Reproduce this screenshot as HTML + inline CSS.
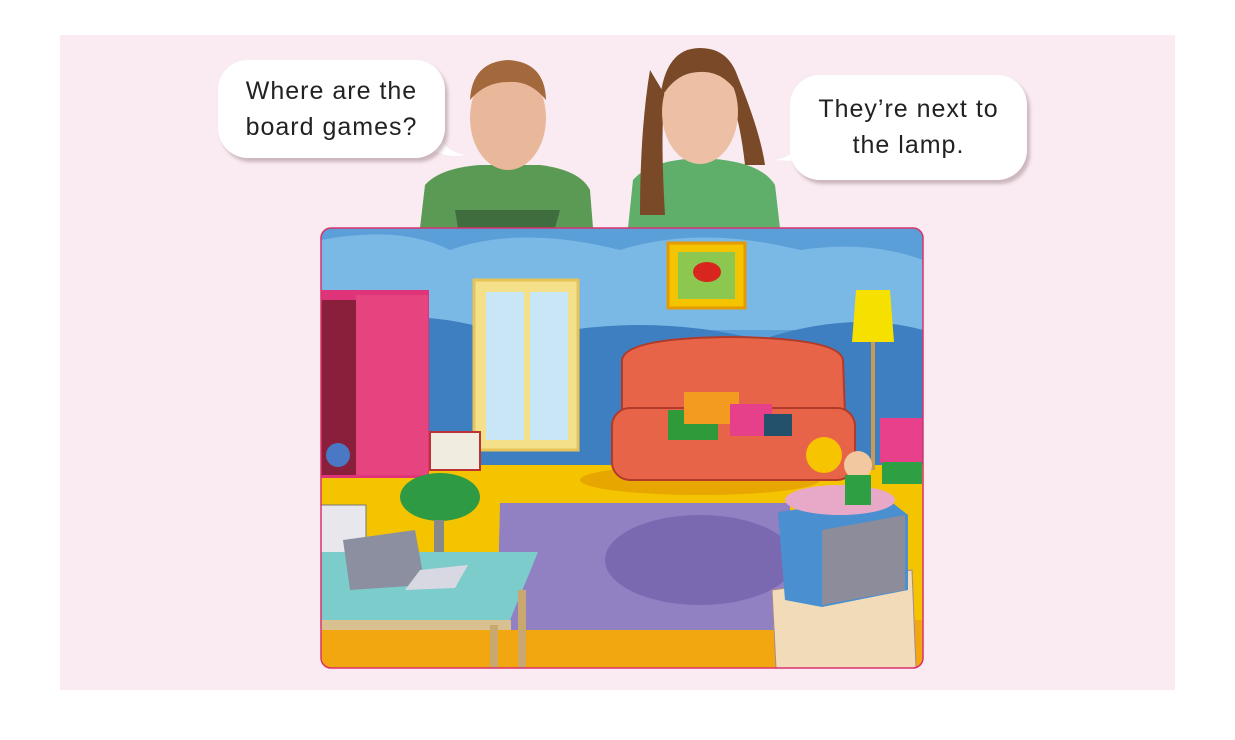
<!DOCTYPE html>
<html><head><meta charset="utf-8"><style>
html,body{margin:0;padding:0;background:#fff;width:1235px;height:740px;overflow:hidden}
.panel{position:absolute;left:60px;top:35px;width:1115px;height:655px;background:#f9ebf1}
.bub{position:absolute;background:#fff;border-radius:30px;box-shadow:3px 4px 3px rgba(150,120,130,.45);font-family:"Liberation Sans",sans-serif;font-size:25px;color:#222;text-align:center;line-height:36px;letter-spacing:1px}
svg{position:absolute;left:0;top:0}
</style></head><body>
<div class="panel"></div>
<svg width="1235" height="740">
<!-- boy -->
<path d="M420 228 L425 185 Q440 168 480 165 L540 165 Q580 170 590 190 L593 228 Z" fill="#5a9a55"/>
<ellipse cx="508" cy="118" rx="38" ry="52" fill="#e9b79a"/>
<path d="M470 100 Q472 62 508 60 Q545 62 546 100 Q530 80 508 82 Q485 82 470 100Z" fill="#a3683c"/>
<path d="M455 210 L560 210 L555 228 L458 228Z" fill="#3f6d3d"/>
<!-- girl -->
<path d="M628 228 L633 180 Q650 160 700 158 Q760 160 775 185 L780 228 Z" fill="#5fae6a"/>
<path d="M650 70 Q640 130 640 215 L665 215 Q660 130 665 95Z" fill="#7a4a28"/>
<path d="M735 70 Q760 130 765 165 L745 165 Q740 120 730 95Z" fill="#7a4a28"/>
<ellipse cx="700" cy="112" rx="38" ry="52" fill="#edc0a5"/>
<path d="M660 100 Q665 48 700 48 Q738 48 742 100 Q725 70 700 72 Q675 72 660 100Z" fill="#7a4a28"/>
<!-- scene -->
<defs><clipPath id="c"><rect x="321" y="228" width="602" height="440" rx="10"/></clipPath></defs>
<g clip-path="url(#c)">
<rect x="321" y="228" width="602" height="440" fill="#5b9fd8"/>
<path d="M321 240 Q400 225 450 250 Q520 225 620 250 Q700 225 800 250 Q870 240 923 260 L923 330 L321 330Z" fill="#7ab8e6"/>
<path d="M321 330 Q420 300 520 340 Q640 310 760 340 Q850 310 923 330 L923 470 L321 470Z" fill="#3d7fc0"/>
<rect x="321" y="465" width="602" height="203" fill="#f5c400"/>
<path d="M321 620 L923 620 L923 668 L321 668Z" fill="#f2a710"/>
<path d="M500 503 L790 503 L790 630 L497 630Z" fill="#9180c2"/>
<ellipse cx="700" cy="560" rx="95" ry="45" fill="#7a69b0"/>
<!-- window -->
<rect x="474" y="280" width="104" height="170" fill="#f5e08a" stroke="#e7c45a" stroke-width="3"/>
<rect x="486" y="292" width="38" height="148" fill="#c9e6f7"/><rect x="530" y="292" width="38" height="148" fill="#c9e6f7"/>
<!-- picture -->
<rect x="668" y="243" width="77" height="65" fill="#f4c400" stroke="#e49a00" stroke-width="3"/>
<rect x="678" y="252" width="57" height="47" fill="#8cc850"/>
<ellipse cx="707" cy="272" rx="14" ry="10" fill="#d8261e"/>
<!-- wardrobe -->
<rect x="321" y="290" width="108" height="188" fill="#e0347a"/>
<rect x="321" y="300" width="35" height="175" fill="#8a1f3c"/>
<rect x="356" y="295" width="72" height="180" fill="#e6447f"/>
<circle cx="338" cy="455" r="12" fill="#4a78c4"/>
<!-- books -->
<rect x="430" y="432" width="50" height="38" fill="#f1ece0" stroke="#b33" stroke-width="2"/>
<!-- sofa -->
<ellipse cx="700" cy="480" rx="120" ry="15" fill="#e8a600"/>
<path d="M622 360 Q625 338 730 337 Q840 338 843 360 L845 415 L622 415Z" fill="#e86448" stroke="#b13a28" stroke-width="2"/>
<rect x="612" y="408" width="243" height="72" rx="18" fill="#e86448" stroke="#b13a28" stroke-width="2"/>
<rect x="668" y="410" width="50" height="30" fill="#2f9a3a"/>
<rect x="684" y="392" width="55" height="32" fill="#f39a20"/>
<rect x="730" y="404" width="42" height="32" fill="#e6408a"/>
<rect x="764" y="414" width="28" height="22" fill="#23506a"/>
<!-- lamp -->
<rect x="871" y="340" width="4" height="130" fill="#c79a5a"/>
<path d="M856 290 L890 290 L894 342 L852 342Z" fill="#f6e000"/>
<rect x="880" y="418" width="42" height="45" fill="#e8408a"/><rect x="882" y="462" width="40" height="22" fill="#2ea043"/>
<!-- chair -->
<ellipse cx="440" cy="497" rx="40" ry="24" fill="#2e9a44"/>
<rect x="434" y="520" width="10" height="60" fill="#888"/>
<!-- desk -->
<rect x="321" y="505" width="45" height="80" fill="#e8e8ec" stroke="#777"/>
<path d="M321 552 L538 552 L510 620 L321 620Z" fill="#7dcccc"/>
<rect x="321" y="620" width="190" height="10" fill="#d8c090"/>
<rect x="490" y="625" width="8" height="43" fill="#c9a870"/><rect x="518" y="590" width="8" height="78" fill="#c9a870"/>
<path d="M343 540 L415 530 L425 585 L350 590Z" fill="#8b8fa0"/>
<path d="M420 570 L468 565 L455 588 L405 590Z" fill="#d8d8e2"/>
<!-- TV -->
<path d="M772 590 L912 570 L916 668 L776 668Z" fill="#f2dbb8" stroke="#a88" />
<path d="M778 512 L885 497 L908 515 L908 590 L822 607 L785 600Z" fill="#4a8fd0"/>
<path d="M822 530 L905 515 L905 590 L822 605Z" fill="#8c8c9a"/>
<ellipse cx="840" cy="500" rx="55" ry="15" fill="#e8a8c8"/>
<circle cx="824" cy="455" r="18" fill="#f6c400"/>
<circle cx="858" cy="465" r="14" fill="#f2c8a0"/>
<rect x="845" y="475" width="26" height="30" fill="#2ea043"/>
</g>
<rect x="321" y="228" width="602" height="440" rx="10" fill="none" stroke="#d9336a" stroke-width="1.5"/>
<!-- bubble tails -->
<path d="M420 140 Q440 160 465 155 Q440 150 440 130Z" fill="#fff"/>
<path d="M810 140 Q790 158 775 160 Q800 162 820 160Z" fill="#fff"/>
</svg>
<div class="bub" style="left:218px;top:60px;width:227px;height:98px;padding-top:13px;box-sizing:border-box">Where are the<br>board games?</div>
<div class="bub" style="left:790px;top:75px;width:237px;height:105px;padding-top:16px;box-sizing:border-box">They’re next to<br>the lamp.</div>
</body></html>
